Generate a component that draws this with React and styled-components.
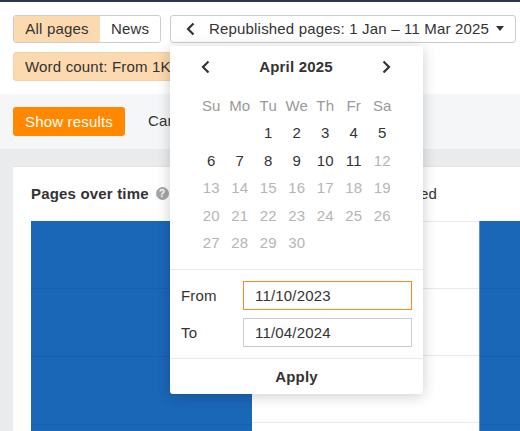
import React from "react";
import styled, { createGlobalStyle } from "styled-components";

const GlobalStyle = createGlobalStyle`
  html, body {
    margin: 0;
    height: 100%;
    overflow: hidden;
    background: #fff;
  }
  body {
    font-family: "Liberation Sans", Arial, sans-serif;
    font-size: 15px;
    letter-spacing: 0.18px;
    color: #333;
  }
`;

const weekDays = ["Su", "Mo", "Tu", "We", "Th", "Fr", "Sa"];
const days = Array.from({ length: 30 }, (_, i) => i + 1);

const Chevron = ({ dir, size = 16 }) => (
  <svg width={size} height={size} viewBox="0 0 16 16" fill="none">
    <path
      d={dir === "left" ? "M10.5 2.5 5 8l5.5 5.5" : "M5.5 2.5 11 8l-5.5 5.5"}
      stroke="#333"
      strokeWidth="2.2"
    />
  </svg>
);

const App = () => {
  return (
    <Page>
      <GlobalStyle />
      <Toolbar>
        <FilterRow>
          <Segmented>
            <Segment $active>All pages</Segment>
            <Segment>News</Segment>
          </Segmented>
          <RangeButton>
            <Chevron dir="left" />
            <RangeText>Republished pages: 1 Jan – 11 Mar 2025</RangeText>
            <Caret />
          </RangeButton>
        </FilterRow>
        <Chip>Word count: From 1K</Chip>
      </Toolbar>

      <ActionBar>
        <ShowButton>Show results</ShowButton>
        <CancelLink>Cancel</CancelLink>
      </ActionBar>

      <Content>
        <Card>
          <CardHeader>
            <CardTitle>Pages over time</CardTitle>
            <HelpIcon>?</HelpIcon>
            <Legend>Republished</Legend>
          </CardHeader>
          <Chart>
            <Bar />
            <Gap />
            <Bar />
          </Chart>
        </Card>
      </Content>

      <Popover>
        <MonthRow>
          <Chevron dir="left" />
          <MonthName>April 2025</MonthName>
          <Chevron dir="right" />
        </MonthRow>
        <Calendar>
          {weekDays.map((d) => (
            <WeekDay key={d}>{d}</WeekDay>
          ))}
          <span />
          <span />
          {days.map((d) => (
            <Day key={d} $past={d <= 11}>
              {d}
            </Day>
          ))}
        </Calendar>
        <Fields>
          <FieldRow>
            <FieldLabel>From</FieldLabel>
            <DateInput $focus>11/10/2023</DateInput>
          </FieldRow>
          <FieldRow>
            <FieldLabel>To</FieldLabel>
            <DateInput>11/04/2024</DateInput>
          </FieldRow>
        </Fields>
        <Apply>Apply</Apply>
      </Popover>
    </Page>
  );
};
export default App;

const Page = styled.div`
  position: relative;
  width: 520px;
  height: 431px;
  overflow: hidden;
  border-top: 2px solid #2b3553;
  box-sizing: border-box;
  display: flex;
  flex-direction: column;
`;

const Toolbar = styled.div`
  height: 92px;
  box-sizing: border-box;
  padding: 13px 4px 0 13px;
  display: flex;
  flex-direction: column;
  gap: 9px;
  flex-shrink: 0;
`;

const FilterRow = styled.div`
  display: flex;
  gap: 9px;
`;

const Segmented = styled.div`
  display: flex;
  width: 148px;
  height: 28px;
  box-sizing: border-box;
  border: 1px solid #ccc;
  border-radius: 3px;
  overflow: hidden;
`;

const Segment = styled.div`
  display: flex;
  align-items: center;
  justify-content: center;
  padding-bottom: 1px;
  width: ${(p) => (p.$active ? "86px" : "auto")};
  flex: ${(p) => (p.$active ? "none" : 1)};
  background: ${(p) => (p.$active ? "#fcd9ae" : "#fff")};
  color: #333;
`;

const RangeButton = styled.div`
  display: flex;
  align-items: center;
  flex: 1;
  height: 28px;
  box-sizing: border-box;
  border: 1px solid #ccc;
  border-radius: 3px;
  padding: 0 11px 1px 12px;
`;

const RangeText = styled.span`
  margin-left: 10px;
  flex: 1;
  white-space: nowrap;
`;

const Caret = styled.span`
  width: 0;
  height: 0;
  border-left: 4px solid transparent;
  border-right: 4px solid transparent;
  border-top: 5px solid #333;
`;

const Chip = styled.div`
  display: flex;
  align-items: center;
  width: 190px;
  height: 29px;
  box-sizing: border-box;
  padding-left: 11px;
  background: #fcd9ae;
  border: 1px solid #f0d2ac;
  border-radius: 3px;
  white-space: nowrap;
`;

const ActionBar = styled.div`
  height: 55px;
  box-sizing: border-box;
  padding-top: 13px;
  background: #f5f6f7;
  display: flex;
  padding-left: 13px;
  flex-shrink: 0;
`;

const ShowButton = styled.div`
  width: 112px;
  height: 28px;
  padding-bottom: 1px;
  display: flex;
  align-items: center;
  justify-content: center;
  background: #ff8800;
  border-radius: 3px;
  color: #fff;
`;

const CancelLink = styled.div`
  margin-left: 23px;
  height: 29px;
  line-height: 28px;
`;

const Content = styled.div`
  flex: 1;
  background: #eaebed;
  padding: 17px 0 0 13px;
  display: flex;
  min-height: 0;
`;

const Card = styled.div`
  flex: 1;
  background: #fff;
  border-top: 1px solid #e4e5e7;
  padding-left: 18px;
  display: flex;
  flex-direction: column;
`;

const CardHeader = styled.div`
  height: 53px;
  padding-bottom: 1px;
  display: flex;
  align-items: center;
  flex-shrink: 0;
`;

const CardTitle = styled.span`
  font-weight: 700;
`;

const HelpIcon = styled.span`
  width: 13px;
  height: 13px;
  margin-left: 7px;
  border-radius: 50%;
  background: #a6a6a6;
  color: #fff;
  font-size: 10px;
  font-weight: 700;
  line-height: 13px;
  text-align: center;
`;

const Legend = styled.span`
  margin-left: 183px;
`;

const Chart = styled.div`
  flex: 1;
  display: flex;
  border-top: 1px solid #e9e9e9;
  background: repeating-linear-gradient(
    to bottom,
    transparent 0 66px,
    #e9e9e9 66px 67px
  );
`;

const Bar = styled.div`
  flex: 1;
  margin-top: -1px;
  background: repeating-linear-gradient(
    to bottom,
    #1a66b7 0 67px,
    #185fab 67px 68px
  );
  border-left: 1px solid #5b92cf;
  &:first-child {
    flex: none;
    width: 221px;
    border-left: 0;
  }
`;

const Gap = styled.div`
  width: 227px;
`;

const Popover = styled.div`
  position: absolute;
  left: 170px;
  top: 44px;
  width: 253px;
  height: 348px;
  box-sizing: border-box;
  display: flex;
  flex-direction: column;
  background: #fff;
  border-radius: 3px;
  box-shadow: 0 2px 14px rgba(0, 0, 0, 0.2);
`;

const MonthRow = styled.div`
  height: 41px;
  padding: 0 29px 1px 28px;
  display: flex;
  align-items: center;
  justify-content: space-between;
  flex-shrink: 0;
`;

const MonthName = styled.span`
  font-weight: 700;
`;

const Calendar = styled.div`
  display: grid;
  grid-template-columns: repeat(7, 28.5px);
  grid-auto-rows: 27.5px;
  padding: 3.5px 0 0 27px;
  height: 177.5px;
  justify-items: center;
  align-items: center;
  flex-shrink: 0;
`;

const WeekDay = styled.span`
  color: #999;
`;

const Day = styled.span`
  color: ${(p) => (p.$past ? "#333" : "#b5b5b5")};
`;

const Fields = styled.div`
  border-top: 1px solid #e9e9e9;
  border-bottom: 1px solid #e9e9e9;
  padding: 11px;
  display: flex;
  flex-direction: column;
  gap: 8px;
`;

const FieldRow = styled.div`
  display: flex;
  align-items: center;
  justify-content: space-between;
`;

const FieldLabel = styled.span``;

const DateInput = styled.div`
  width: 169px;
  height: 29px;
  box-sizing: border-box;
  border: 1px solid ${(p) => (p.$focus ? "#f78d1e" : "#ccc")};
  padding-left: 11px;
  line-height: 27px;
`;

const Apply = styled.div`
  flex: 1;
  display: flex;
  align-items: center;
  justify-content: center;
  font-weight: 700;
`;
